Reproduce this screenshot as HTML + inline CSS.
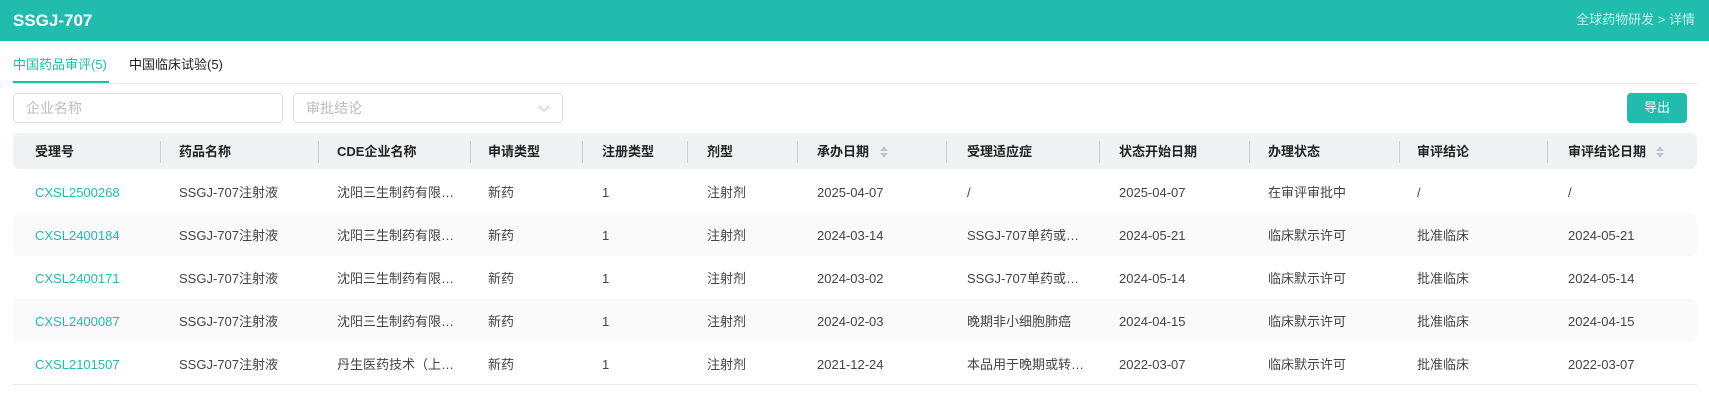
<!DOCTYPE html>
<html><head><meta charset="utf-8"><style>
*{box-sizing:border-box;margin:0;padding:0}
body{width:1709px;height:401px;background:#fff;font-family:"Liberation Sans","Noto Sans CJK SC",sans-serif;position:relative;overflow:hidden;color:#333}
.hdr{position:absolute;left:0;top:0;width:1709px;height:41px;background:#20bcae}
.hdr .t{position:absolute;left:13px;top:10px;line-height:22px;color:#fff;font-weight:bold;font-size:17px}
.hdr .b{position:absolute;right:14px;top:10px;line-height:20px;color:#c4efe9;font-size:13px}
.tab{position:absolute;top:55px;line-height:20px;font-size:13px}
.ul{position:absolute;left:13px;top:81px;width:96px;height:2px;background:#20bcae}
.dl{position:absolute;left:13px;top:83px;width:1684px;height:1px;background:#e6e8eb}
.inp{position:absolute;top:93px;height:30px;border:1px solid #dcdfe6;border-radius:4px;width:270px;color:#b8bcc4;font-size:14px;padding:0 12px;line-height:28px}
.btn{position:absolute;left:1627px;top:93px;width:60px;height:30px;background:#20bcae;border-radius:4px;color:#fff;font-size:13px;text-align:center;line-height:30px}
.th{position:absolute;left:13px;top:133px;width:1684px;height:36px;background:#eff2f3;border-radius:6px}
.c{position:absolute;font-size:13px;white-space:nowrap;line-height:20px;height:20px}
.h{font-weight:bold;color:#222;top:142px}
.dv{position:absolute;top:141px;width:1px;height:22px;background:#c9d0d2}
.row{position:absolute;left:13px;width:1684px;height:43px;border-radius:6px}
.alt{background:#fafafa}
.sort{position:absolute;top:145px;width:10px;height:14px}
.g{color:#20bcae}
.d{color:#444}
.r1{top:183px}.r2{top:226px}.r3{top:269px}.r4{top:312px}.r5{top:355px}
</style></head><body>
<div class="hdr"><div class="t">SSGJ-707</div><div class="b">全球药物研发 &gt; 详情</div></div>
<div class="tab" style="left:13px;color:#20bcae">中国药品审评(5)</div>
<div class="tab" style="left:129px;color:#222">中国临床试验(5)</div>
<div class="dl"></div><div class="ul"></div>
<div class="inp" style="left:13px">企业名称</div>
<div class="inp" style="left:293px">审批结论<svg style="position:absolute;right:12px;top:11px" width="12" height="7" viewBox="0 0 12 7"><path d="M1 1l5 5 5-5" fill="none" stroke="#c0c4cc" stroke-width="1"/></svg></div>
<div class="btn">导出</div>
<div class="th"></div>
<div class="row alt" style="top:213px"></div>
<div class="row alt" style="top:299px"></div>
<div style="position:absolute;left:13px;top:384px;width:1684px;height:1px;background:#e6e8eb"></div>
<div class="dv" style="left:160px"></div><div class="dv" style="left:318px"></div><div class="dv" style="left:470px"></div><div class="dv" style="left:582px"></div><div class="dv" style="left:687px"></div><div class="dv" style="left:797px"></div><div class="dv" style="left:946px"></div><div class="dv" style="left:1099px"></div><div class="dv" style="left:1249px"></div><div class="dv" style="left:1399px"></div><div class="dv" style="left:1547px"></div>
<div class="c h" style="left:35px">受理号</div>
<div class="c h" style="left:179px">药品名称</div>
<div class="c h" style="left:337px">CDE企业名称</div>
<div class="c h" style="left:488px">申请类型</div>
<div class="c h" style="left:602px">注册类型</div>
<div class="c h" style="left:707px">剂型</div>
<div class="c h" style="left:817px">承办日期</div>
<div class="c h" style="left:967px">受理适应症</div>
<div class="c h" style="left:1119px">状态开始日期</div>
<div class="c h" style="left:1268px">办理状态</div>
<div class="c h" style="left:1417px">审评结论</div>
<div class="c h" style="left:1568px">审评结论日期</div>
<svg class="sort" style="left:879px" viewBox="0 0 10 14"><path d="M5 1L9 6H1z" fill="#c0c4cc"/><path d="M5 13L9 8H1z" fill="#c0c4cc"/></svg>
<svg class="sort" style="left:1655px" viewBox="0 0 10 14"><path d="M5 1L9 6H1z" fill="#c0c4cc"/><path d="M5 13L9 8H1z" fill="#c0c4cc"/></svg>
<div class="c g r1" style="left:35px">CXSL2500268</div><div class="c d r1" style="left:179px">SSGJ-707注射液</div><div class="c d r1" style="left:337px">沈阳三生制药有限…</div><div class="c d r1" style="left:488px">新药</div><div class="c d r1" style="left:602px">1</div><div class="c d r1" style="left:707px">注射剂</div><div class="c d r1" style="left:817px">2025-04-07</div><div class="c d r1" style="left:967px">/</div><div class="c d r1" style="left:1119px">2025-04-07</div><div class="c d r1" style="left:1268px">在审评审批中</div><div class="c d r1" style="left:1417px">/</div><div class="c d r1" style="left:1568px">/</div>
<div class="c g r2" style="left:35px">CXSL2400184</div><div class="c d r2" style="left:179px">SSGJ-707注射液</div><div class="c d r2" style="left:337px">沈阳三生制药有限…</div><div class="c d r2" style="left:488px">新药</div><div class="c d r2" style="left:602px">1</div><div class="c d r2" style="left:707px">注射剂</div><div class="c d r2" style="left:817px">2024-03-14</div><div class="c d r2" style="left:967px">SSGJ-707单药或…</div><div class="c d r2" style="left:1119px">2024-05-21</div><div class="c d r2" style="left:1268px">临床默示许可</div><div class="c d r2" style="left:1417px">批准临床</div><div class="c d r2" style="left:1568px">2024-05-21</div>
<div class="c g r3" style="left:35px">CXSL2400171</div><div class="c d r3" style="left:179px">SSGJ-707注射液</div><div class="c d r3" style="left:337px">沈阳三生制药有限…</div><div class="c d r3" style="left:488px">新药</div><div class="c d r3" style="left:602px">1</div><div class="c d r3" style="left:707px">注射剂</div><div class="c d r3" style="left:817px">2024-03-02</div><div class="c d r3" style="left:967px">SSGJ-707单药或…</div><div class="c d r3" style="left:1119px">2024-05-14</div><div class="c d r3" style="left:1268px">临床默示许可</div><div class="c d r3" style="left:1417px">批准临床</div><div class="c d r3" style="left:1568px">2024-05-14</div>
<div class="c g r4" style="left:35px">CXSL2400087</div><div class="c d r4" style="left:179px">SSGJ-707注射液</div><div class="c d r4" style="left:337px">沈阳三生制药有限…</div><div class="c d r4" style="left:488px">新药</div><div class="c d r4" style="left:602px">1</div><div class="c d r4" style="left:707px">注射剂</div><div class="c d r4" style="left:817px">2024-02-03</div><div class="c d r4" style="left:967px">晚期非小细胞肺癌</div><div class="c d r4" style="left:1119px">2024-04-15</div><div class="c d r4" style="left:1268px">临床默示许可</div><div class="c d r4" style="left:1417px">批准临床</div><div class="c d r4" style="left:1568px">2024-04-15</div>
<div class="c g r5" style="left:35px">CXSL2101507</div><div class="c d r5" style="left:179px">SSGJ-707注射液</div><div class="c d r5" style="left:337px">丹生医药技术（上…</div><div class="c d r5" style="left:488px">新药</div><div class="c d r5" style="left:602px">1</div><div class="c d r5" style="left:707px">注射剂</div><div class="c d r5" style="left:817px">2021-12-24</div><div class="c d r5" style="left:967px">本品用于晚期或转…</div><div class="c d r5" style="left:1119px">2022-03-07</div><div class="c d r5" style="left:1268px">临床默示许可</div><div class="c d r5" style="left:1417px">批准临床</div><div class="c d r5" style="left:1568px">2022-03-07</div>
</body></html>
